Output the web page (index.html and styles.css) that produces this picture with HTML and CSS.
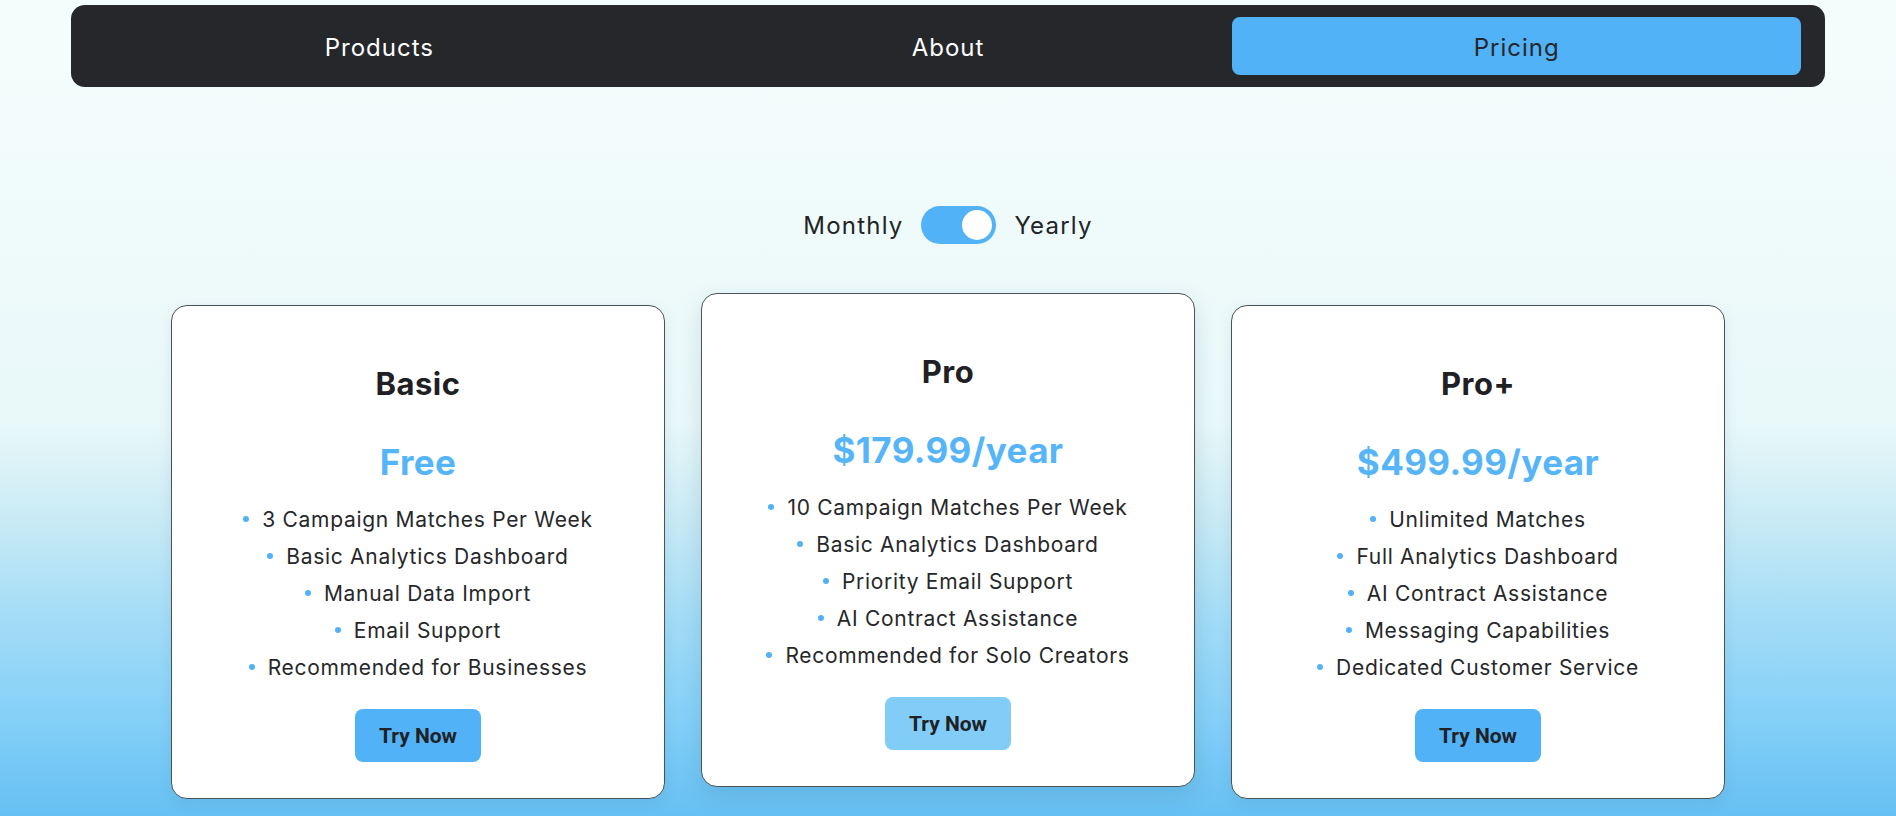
FILE: index.html
```html
<!DOCTYPE html>
<html lang="en">
<head>
<meta charset="utf-8">
<title>Pricing</title>
<link rel="stylesheet" href="styles.css">
</head>
<body>
<header class="topnav">
  <a class="nav-item" href="#">Products</a>
  <a class="nav-item" href="#">About</a>
  <a class="nav-item active" href="#">Pricing</a>
</header>

<main class="pricing">
  <div class="billing">
    <span class="billing-label">Monthly</span>
    <span class="switch"><span class="knob"></span></span>
    <span class="billing-label">Yearly</span>
  </div>

  <div class="plans">
    <section class="plan">
      <h2 class="plan-name">Basic</h2>
      <p class="plan-price">Free</p>
      <ul class="features">
        <li>3 Campaign Matches Per Week</li>
        <li>Basic Analytics Dashboard</li>
        <li>Manual Data Import</li>
        <li>Email Support</li>
        <li>Recommended for Businesses</li>
      </ul>
      <button class="try">Try Now</button>
    </section>

    <section class="plan plan-featured">
      <h2 class="plan-name">Pro</h2>
      <p class="plan-price">$179.99/year</p>
      <ul class="features">
        <li>10 Campaign Matches Per Week</li>
        <li>Basic Analytics Dashboard</li>
        <li>Priority Email Support</li>
        <li>AI Contract Assistance</li>
        <li>Recommended for Solo Creators</li>
      </ul>
      <button class="try try-light">Try Now</button>
    </section>

    <section class="plan">
      <h2 class="plan-name">Pro+</h2>
      <p class="plan-price">$499.99/year</p>
      <ul class="features">
        <li>Unlimited Matches</li>
        <li>Full Analytics Dashboard</li>
        <li>AI Contract Assistance</li>
        <li>Messaging Capabilities</li>
        <li>Dedicated Customer Service</li>
      </ul>
      <button class="try">Try Now</button>
    </section>
  </div>
</main>
</body>
</html>
```

FILE: styles.css
```css
* {
  box-sizing: border-box;
}

html, body {
  margin: 0;
  padding: 0;
}

body {
  min-height: 816px;
  font-family: "Inter", "Open Sans", sans-serif;
  color: #222326;
  background: linear-gradient(180deg,
    #f3fdfc 0%,
    #eefafa 35%,
    #e8f8f9 52%,
    #c8eaf5 64%,
    #a2dcf6 76%,
    #84d0f8 88%,
    #66c0f2 100%);
  overflow: hidden;
}

/* top navigation */
.topnav {
  display: flex;
  margin: 5px 71px 0;
  height: 82px;
  padding: 12px 24px;
  background: #25272b;
  border-radius: 14px;
}

.nav-item {
  flex: 1;
  display: flex;
  align-items: center;
  justify-content: center;
  padding-top: 2px;
  font-size: 24px;
  letter-spacing: 1px;
  color: #ffffff;
  text-decoration: none;
  border-radius: 8px;
}

.nav-item.active {
  background: #52b2f7;
  color: #25272b;
}

/* billing toggle */
.billing {
  display: flex;
  justify-content: center;
  align-items: center;
  gap: 18px;
  margin-top: 119px;
}

.billing-label {
  font-size: 24px;
  letter-spacing: 1.2px;
  color: #222326;
}

.switch {
  display: flex;
  align-items: center;
  justify-content: flex-end;
  width: 75px;
  height: 38px;
  padding: 4px;
  border-radius: 19px;
  background: #52b2f7;
}

.knob {
  width: 30px;
  height: 30px;
  border-radius: 50%;
  background: #ffffff;
}

/* plans */
.plans {
  display: flex;
  justify-content: center;
  align-items: flex-start;
  gap: 36px;
  margin-top: 61px;
}

.plan {
  display: flex;
  flex-direction: column;
  align-items: center;
  width: 494px;
  height: 494px;
  padding: 58px 10px 0;
  background: #ffffff;
  border: 1px solid #4b5257;
  border-radius: 16px;
  box-shadow: 0 4px 14px rgba(40, 90, 120, 0.10);
  text-align: center;
}

.plan-featured {
  transform: translateY(-12px);
  box-shadow: 0 8px 22px rgba(40, 90, 120, 0.16);
}

.plan-name {
  margin: 0;
  font-size: 31px;
  line-height: 40px;
  font-weight: 700;
  letter-spacing: 0.5px;
  color: #1f2023;
}

.plan-price {
  margin: 36px 0 0;
  font-size: 35px;
  line-height: 44px;
  font-weight: 700;
  letter-spacing: 0.4px;
  color: #56b5f9;
}

.features {
  margin: 17px 0 0;
  padding: 0;
  list-style: none;
}

.features li {
  font-size: 21px;
  line-height: 37px;
  letter-spacing: 0.7px;
  color: #26272a;
  white-space: nowrap;
}

.features li::before {
  content: "";
  display: inline-block;
  width: 6px;
  height: 6px;
  margin-right: 13px;
  border-radius: 50%;
  background: #52b2f7;
  vertical-align: middle;
  position: relative;
  top: -2px;
}

.try {
  margin-top: 23px;
  height: 53px;
  padding: 0 24px;
  border: none;
  border-radius: 8px;
  background: #52b2f7;
  color: #202124;
  font-family: "Roboto", "Liberation Sans", sans-serif;
  font-size: 21px;
  font-weight: 700;
  cursor: pointer;
}

.try-light {
  background: #81cdf8;
}
```
